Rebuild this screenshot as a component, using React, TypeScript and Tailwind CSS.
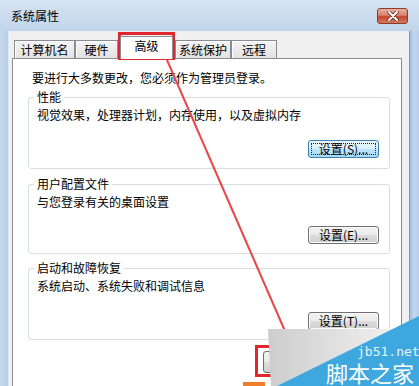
import React from "react";

const tabs = [
  { label: "计算机名", w: "w-[61px]" },
  { label: "硬件", w: "w-[43px]" },
  { label: "高级", w: "w-[53px]", active: true },
  { label: "系统保护", w: "w-[56px]" },
  { label: "远程", w: "w-[46px]" },
];

function WinButton({ label, focused }: { label: string; focused?: boolean }) {
  if (focused) {
    return (
      <div className="w-[71px] h-[18px] rounded-[3px] border border-[#3c7fb1] bg-[linear-gradient(#eaf6fd_0%,#d9f0fc_50%,#bee6fd_50%,#a7d9f5_100%)] p-[2px]">
        <div className="h-full border border-dotted border-[#222] flex items-center justify-center text-[12px] leading-[12px]">
          {label}
        </div>
      </div>
    );
  }
  return (
    <div className="w-[71px] h-[18px] rounded-[3px] border border-[#707070] bg-[linear-gradient(#f2f2f2_0%,#ebebeb_50%,#dddddd_50%,#cfcfcf_100%)] shadow-[inset_0_0_0_1px_#fbfbfb] flex items-center justify-center text-[12px] leading-[12px]">
      {label}
    </div>
  );
}

function Group({
  title,
  desc,
  button,
  focused,
  btnMt,
  pb,
  mt,
}: {
  title: string;
  desc: string;
  button: string;
  focused?: boolean;
  btnMt: string;
  pb: string;
  mt: string;
}) {
  return (
    <fieldset className={`${mt} ${pb} border border-[#d5dfe5] rounded-[3px] pl-[5px] pr-[10px]`}>
      <legend className="px-[3px] leading-[14px]">{title}</legend>
      <div className="pl-[3px] mt-[4px] leading-[14px]">{desc}</div>
      <div className={`${btnMt} flex justify-end`}>
        <WinButton label={button} focused={focused} />
      </div>
    </fieldset>
  );
}

export default function App() {
  return (
    <div className="relative w-[419px] h-[386px] overflow-hidden bg-[#bfd4ec] text-[12px] text-black font-['Noto_Sans_CJK_SC','Liberation_Sans',sans-serif]">
      {/* title bar */}
      <div className="h-[31px] flex items-center justify-between pl-[11px] pr-[11px] bg-[linear-gradient(#d6e3f2,#c1d5eb)]">
        <span className="leading-[14px]">系统属性</span>
        <div className="w-[31px] h-[16px] rounded-[3px] border border-[#8c3a2a] bg-[linear-gradient(#eab0a2_0%,#d8806a_45%,#c5472e_55%,#d27a5e_100%)] flex items-center justify-center">
          <svg width="12" height="10" viewBox="0 0 12 10">
            <path d="M2 1 L10 9 M10 1 L2 9" stroke="#5a2418" strokeWidth="3.4" strokeLinecap="round" />
            <path d="M2 1 L10 9 M10 1 L2 9" stroke="#ffffff" strokeWidth="2" strokeLinecap="round" />
          </svg>
        </div>
      </div>

      {/* body */}
      <div className="flex h-[355px]">
        <div className="w-[9px] bg-[linear-gradient(90deg,#c6d9ee,#b9cfe8)] border-r border-[#dfe8f2]" />
        <div className="flex-1 bg-[#f0f0f0] pl-[3px] pr-[7px] pt-[5px]">
          {/* tabs */}
          <div className="flex items-end h-[22px] pl-[2px] relative z-10">
            {tabs.map((t) =>
              t.active ? (
                <div
                  key={t.label}
                  className={`${t.w} mx-[2px] h-[23px] -mb-[1px] bg-white border border-b-0 border-[#898c95] text-center pt-[2px] leading-[14px]`}
                >
                  {t.label}
                </div>
              ) : (
                <div
                  key={t.label}
                  className={`${t.w} h-[18px] border border-b-0 border-[#898c95] bg-[linear-gradient(#f4f4f4,#e2e2e2)] shadow-[inset_1px_1px_0_#ffffff] flex items-center justify-center leading-[14px]`}
                >
                  {t.label}
                </div>
              )
            )}
          </div>

          {/* panel */}
          <div className="h-[400px] border border-[#898c95] bg-white pl-[15px] pr-[11px] pt-[12px]">
            <div className="pl-[4px] leading-[14px]">要进行大多数更改，您必须作为管理员登录。</div>
            <Group
              mt="mt-[5px]"
              title="性能"
              desc="视觉效果，处理器计划，内存使用，以及虚拟内存"
              button="设置(S)..."
              focused
              btnMt="mt-[18px]"
              pb="pb-[10px]"
            />
            <Group
              mt="mt-[8px]"
              title="用户配置文件"
              desc="与您登录有关的桌面设置"
              button="设置(E)..."
              btnMt="mt-[17px]"
              pb="pb-[9px]"
            />
            <Group
              mt="mt-[7px]"
              title="启动和故障恢复"
              desc="系统启动、系统失败和调试信息"
              button="设置(T)..."
              btnMt="mt-[19px]"
              pb="pb-[9px]"
            />
            {/* environment variables button, mostly hidden under the watermark */}
            <div className="mt-[11px] flex justify-end pr-[10px]">
              <div className="w-[117px] h-[22px] rounded-[3px] border border-[#707070] bg-[linear-gradient(#f2f2f2_0%,#ebebeb_50%,#dddddd_50%,#cfcfcf_100%)]" />
            </div>
          </div>
        </div>
        <div className="w-[10px] bg-[linear-gradient(90deg,#9fbadb,#c3d7ee_40%,#b6cde8)] border-l border-[#7f9db9]" />
      </div>

      {/* annotations */}
      <svg className="absolute left-0 top-0 pointer-events-none" width="419" height="386" viewBox="0 0 419 386">
        <line x1="167" y1="60" x2="288" y2="338" stroke="#e8474d" strokeWidth="2" />
      </svg>
      <div className="absolute left-[118px] top-[32px] w-[57px] h-[28px] border-[3px] border-[#e0262f]" />
      <div className="absolute left-[255px] top-[345px] w-[40px] h-[32px] border-[3px] border-[#e0262f]" />
      <div className="absolute left-[243px] top-[382px] w-[22px] h-[4px] bg-[#ef7d2a]" />

      {/* watermark */}
      <svg className="absolute left-0 top-0 pointer-events-none" width="419" height="386" viewBox="0 0 419 386">
        <defs>
          <linearGradient id="curl2" x1="0" x2="1" y1="0" y2="0">
            <stop offset="0" stopColor="#cdcdcd" />
            <stop offset="1" stopColor="#f0f0f0" />
          </linearGradient>
        </defs>
        <polygon points="268,329 393,329 278,386 271,386" fill="url(#curl2)" />
        <polygon points="419,316 419,386 277,386" fill="#3ea8de" />
      </svg>
      <div className="absolute left-[357px] top-[345px] text-[13px] leading-[13px] text-[#e3f3fc] font-['DejaVu_Sans_Mono',monospace]">
        jb51.net
      </div>
      <div className="absolute left-[326px] top-[361px] text-[22px] leading-[23px] text-white whitespace-nowrap">脚本之家</div>
    </div>
  );
}
